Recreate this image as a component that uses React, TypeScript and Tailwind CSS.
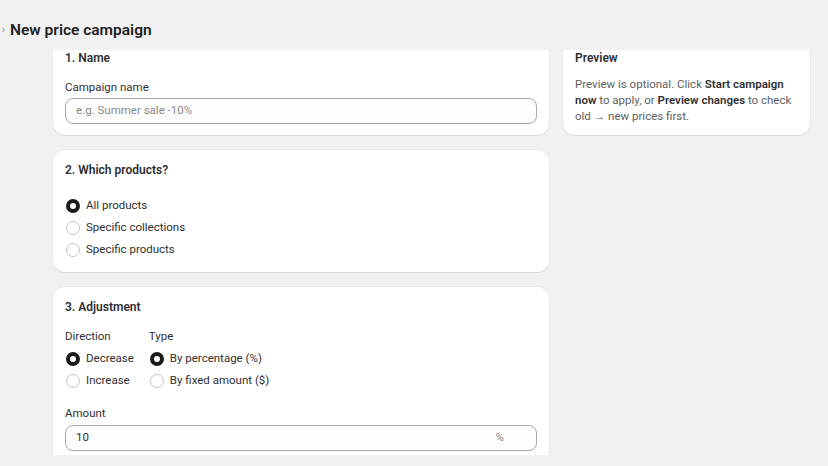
import { ReactElement } from "react";

const Radio = ({ checked, label }: { checked?: boolean; label: string }): ReactElement => {
  return (
    <label className="flex h-[20px] items-center gap-[6px] text-[11.5px] text-[#303030]">
      <span
        className={
          checked
            ? "box-border h-[14px] w-[14px] rounded-full border-[4px] border-[#1a1a1a] bg-white"
            : "box-border h-[14px] w-[14px] rounded-full border border-[#c4c4c4] bg-white"
        }
      />
      <span>{label}</span>
    </label>
  );
};

const Card = ({ children }: { children: React.ReactNode }): ReactElement => {
  return (
    <section className="rounded-[12px] bg-white px-3 pt-3 shadow-[0_1px_0_rgba(26,26,26,0.07),0_0_0_1px_rgba(26,26,26,0.03)]">
      {children}
    </section>
  );
};

const Heading = ({ children }: { children: React.ReactNode }): ReactElement => (
  <h2 className="text-[12px] font-semibold leading-4 text-[#303030]">{children}</h2>
);

const App = (): ReactElement => {
  return (
    <div
      className="h-[466px] w-[828px] overflow-hidden bg-[#f1f1f1]"
      style={{ fontFamily: "Roboto, 'Noto Sans', sans-serif" }}
    >
      <header className="flex h-[50px] items-start pt-[20px]">
        <span className="w-[10px] pr-[3px] text-center text-[11px] leading-5 text-[#8a8a8a]">›</span>
        <h1 className="text-[15.5px] font-semibold leading-5 text-[#1f1f1f]">New price campaign</h1>
      </header>

      {/* scroll area, cards run under the header and past the bottom */}
      <div className="h-[405px] overflow-hidden">
        <div className="-mt-3 flex gap-[14px] pl-[53px]">
          <div className="flex w-[496px] flex-col gap-[15px]">
            <Card>
              <div className="pb-[11px]">
                <Heading>1. Name</Heading>
                <p className="mt-[13px] text-[11.5px] leading-4 text-[#303030]">Campaign name</p>
                <div className="mt-[3px] flex h-[26px] items-center rounded-[8px] border border-[#a9a9a9] bg-[#fdfdfd] px-[10px] text-[11.5px] text-[#8a8a8a]">
                  e.g. Summer sale -10%
                </div>
              </div>
            </Card>

            <Card>
              <div className="pb-[12px]">
                <Heading>2. Which products?</Heading>
                <div className="mt-[18px] flex flex-col gap-[2px] pl-[1px]">
                  <Radio checked label="All products" />
                  <Radio label="Specific collections" />
                  <Radio label="Specific products" />
                </div>
              </div>
            </Card>

            <Card>
              <div className="pb-[20px]">
                <Heading>3. Adjustment</Heading>
                <div className="mt-[13px] flex gap-[15px]">
                  <div>
                    <p className="text-[11.5px] leading-4 text-[#303030]">Direction</p>
                    <div className="mt-[5px] flex flex-col gap-[2px] pl-[1px]">
                      <Radio checked label="Decrease" />
                      <Radio label="Increase" />
                    </div>
                  </div>
                  <div>
                    <p className="text-[11.5px] leading-4 text-[#303030]">Type</p>
                    <div className="mt-[5px] flex flex-col gap-[2px] pl-[1px]">
                      <Radio checked label="By percentage (%)" />
                      <Radio label="By fixed amount ($)" />
                    </div>
                  </div>
                </div>
                <p className="mt-[14px] text-[11.5px] leading-4 text-[#303030]">Amount</p>
                <div className="mt-[4px] flex h-[26px] items-center justify-between rounded-[8px] border border-[#a9a9a9] bg-[#fdfdfd] pl-[10px] pr-[32px] text-[11.5px] text-[#303030]">
                  <span>10</span>
                  <span className="text-[#8a8a8a]">%</span>
                </div>
              </div>
            </Card>
          </div>

          <div className="w-[247px]">
            <Card>
              <div className="pb-[11px]">
                <Heading>Preview</Heading>
                <p className="mt-[10px] text-[11.5px] leading-4 text-[#616161]">
                  Preview is optional. Click <strong className="font-semibold text-[#303030]">Start campaign now</strong> to
                  apply, or <strong className="font-semibold text-[#303030]">Preview changes</strong> to check old → new
                  prices first.
                </p>
              </div>
            </Card>
          </div>
        </div>
      </div>
    </div>
  );
};

export default App;
